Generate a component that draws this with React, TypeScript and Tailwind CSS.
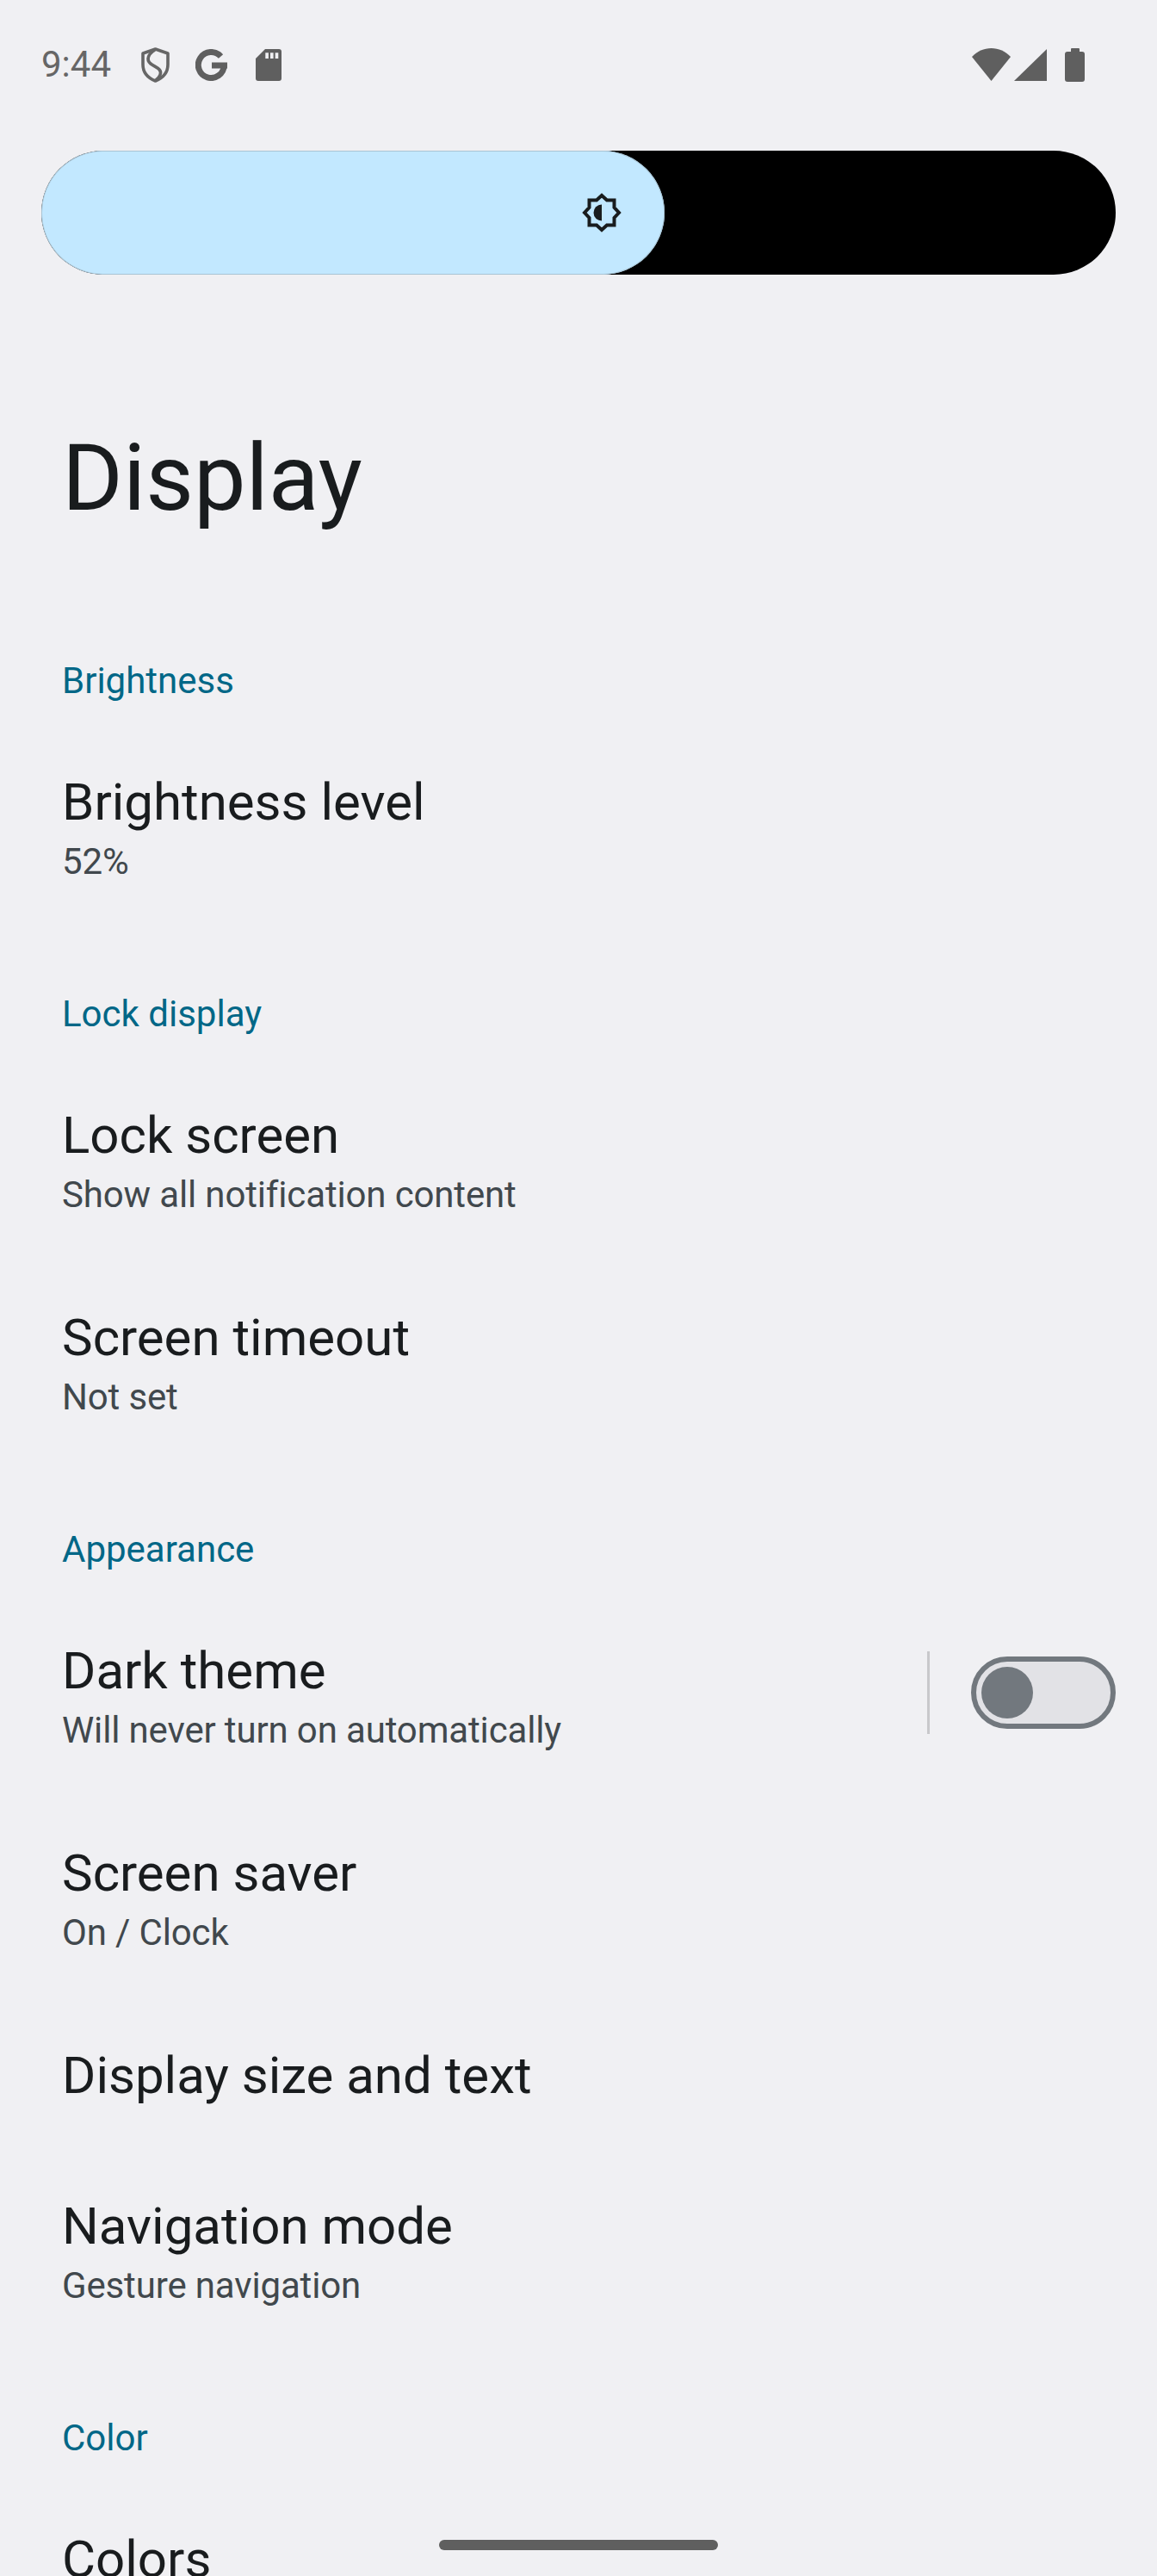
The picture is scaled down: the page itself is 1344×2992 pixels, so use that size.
const font = { fontFamily: 'Roboto, sans-serif' };

function SectionLabel({ children }: { children: string }) {
    return <div className="pt-[71px] pb-[25px] pl-[72px] text-[42px] leading-[56px] text-[#006787]">{children}</div>;
}

function Row({ title, summary, children }: { title: string; summary?: string; children?: React.ReactNode }) {
    return (
        <div className={`flex items-center justify-between pr-12 pl-[72px] ${summary ? 'h-[235px]' : 'h-[175px]'}`}>
            <div>
                <div className="text-[60px] leading-[78px] text-[#191c1e]">{title}</div>
                {summary && <div className="text-[42px] leading-[60px] tracking-[-0.15px] text-[#41484d]">{summary}</div>}
            </div>
            {children}
        </div>
    );
}

function StatusIcons() {
    return (
        <div className="flex h-[150px] items-center justify-between pr-[84px] pl-12">
            <div className="flex items-center">
                <span className="text-[42px] leading-[50px] text-[#666666]">9:44</span>
                <svg className="ml-[35px]" width="33" height="41" viewBox="0 0 33 41" fill="none" stroke="#666" strokeWidth="3.6">
                    <path d="M16.5 2 31 7V20C31 30 24 36 16.5 39 9 36 2 30 2 20V7Z" strokeLinejoin="round" />
                    <path d="M16 3C9 7 5 14 11 19 16 23 25 25 22 32 21 35 18 37 16 39" />
                </svg>
                <svg className="ml-[30px]" width="37" height="37" viewBox="0 0 37 37" fill="none" stroke="#5f5f5f">
                    <path d="M29.5 8.5A15 15 0 1 0 33.3 19" strokeWidth="7" />
                    <rect x="19" y="15.5" width="18" height="7" fill="#5f5f5f" stroke="none" />
                </svg>
                <svg className="ml-[33px]" width="30" height="37" viewBox="0 0 30 37">
                    <path d="M11 0H27A3 3 0 0 1 30 3V34A3 3 0 0 1 27 37H3A3 3 0 0 1 0 34V11Z" fill="#5f5f5f" />
                    <path d="M11.3 4.3h3.6v6.7h-3.6zM17 4.3h3.6v6.7H17zM22.7 4.3h3.6v6.7h-3.6z" fill="#f0f0f3" />
                </svg>
            </div>
            <div className="flex items-center">
                <svg width="45" height="38" viewBox="0 0 45 38" fill="#5f5f5f">
                    <path d="M0 10C6 3.5 14 0 22.5 0S39 3.5 45 10L22.5 38Z" />
                </svg>
                <svg className="ml-1" width="38" height="37" viewBox="0 0 38 37" fill="#5f5f5f">
                    <path d="M38 0V37H0Z" />
                </svg>
                <div className="ml-[21px] flex flex-col items-center">
                    <div className="h-1 w-[10px] rounded-t-[1px] bg-[#5f5f5f]" />
                    <div className="h-[35px] w-[23px] rounded-[3px] bg-[#5f5f5f]" />
                </div>
            </div>
        </div>
    );
}

export default function App() {
    return (
        <div className="relative h-[2992px] w-[1344px] overflow-hidden bg-[#f0f0f3]" style={font}>
            <StatusIcons />

            <div className="mx-12 mt-[25px] h-[144px] overflow-hidden rounded-full bg-black">
                <div className="flex h-full w-[724px] items-center justify-end rounded-full bg-[#c2e8ff] pr-[50px] shadow-[inset_0_0_0_1px_#a9c4d4]">
                    <svg width="46" height="46" viewBox="0 0 46 46">
                        <polygon
                            points="23,3 29,8.5 37.5,8.5 37.5,17 43,23 37.5,29 37.5,37.5 29,37.5 23,43 17,37.5 8.5,37.5 8.5,29 3,23 8.5,17 8.5,8.5 17,8.5"
                            fill="none"
                            stroke="#191c1e"
                            strokeWidth="4"
                        />
                        <path d="M23 13.5A9.5 9.5 0 0 0 23 32.5Z" fill="#191c1e" />
                    </svg>
                </div>
            </div>

            <h1 className="mt-[172px] pl-[72px] text-[108px] leading-[128px] font-normal text-[#191c1e]">Display</h1>

            <div className="mt-[73px]">
                <SectionLabel>Brightness</SectionLabel>
                <Row title="Brightness level" summary="52%" />
                <SectionLabel>Lock display</SectionLabel>
                <Row title="Lock screen" summary="Show all notification content" />
                <Row title="Screen timeout" summary="Not set" />
                <SectionLabel>Appearance</SectionLabel>
                <Row title="Dark theme" summary="Will never turn on automatically">
                    <div className="mb-[10px] flex items-center">
                        <div className="h-24 w-[3px] bg-[#c8c8cb]" />
                        <div className="ml-12 flex h-[84px] w-[168px] items-center rounded-full border-[6px] border-[#72787e] bg-[#e2e2e6] pl-[6px]">
                            <div className="h-[60px] w-[60px] rounded-full bg-[#72787e]" />
                        </div>
                    </div>
                </Row>
                <Row title="Screen saver" summary="On / Clock" />
                <Row title="Display size and text" />
                <Row title="Navigation mode" summary="Gesture navigation" />
                <SectionLabel>Color</SectionLabel>
                <Row title="Colors" />
            </div>

            {/* gesture bar sits over the list */}
            <div className="absolute top-[2950px] left-[510px] h-3 w-[324px] rounded-full bg-[#5f5f5f]" />
        </div>
    );
}
